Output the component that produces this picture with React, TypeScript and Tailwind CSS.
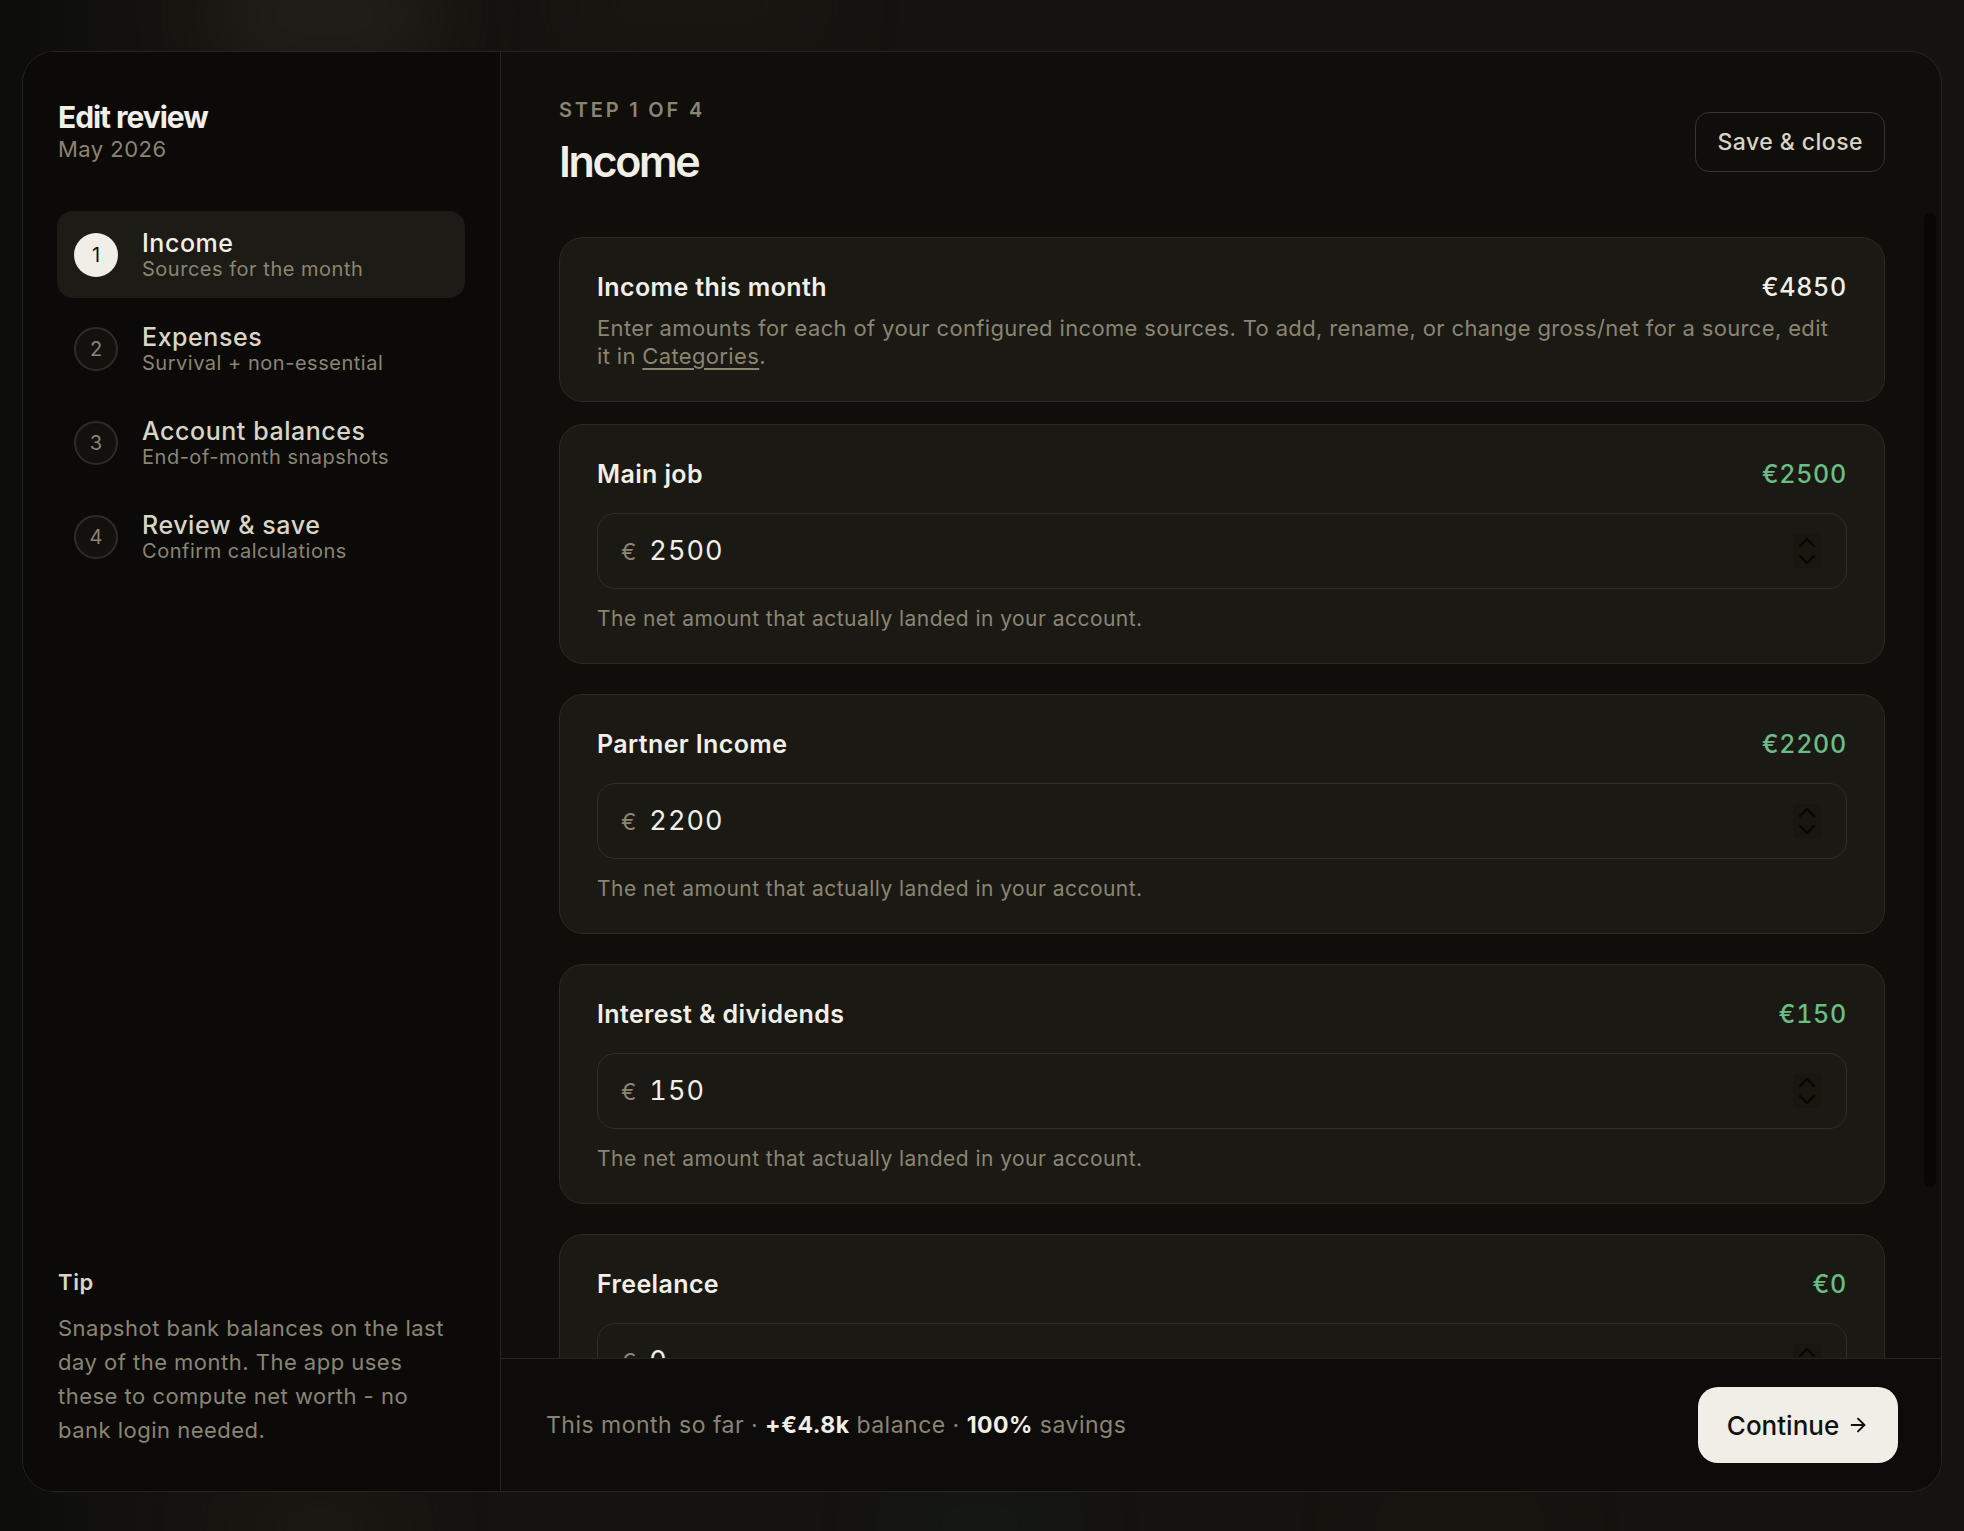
import { ArrowRight } from 'lucide-react'

const steps = [
  { n: 1, title: 'Income', sub: 'Sources for the month', active: true },
  { n: 2, title: 'Expenses', sub: 'Survival + non-essential' },
  { n: 3, title: 'Account balances', sub: 'End-of-month snapshots' },
  { n: 4, title: 'Review & save', sub: 'Confirm calculations' },
]

const sources = [
  { name: 'Main job', value: 2500 },
  { name: 'Partner Income', value: 2200 },
  { name: 'Interest & dividends', value: 150 },
  { name: 'Freelance', value: 0 },
]

function Spinner() {
  return (
    <div className="flex h-[34px] w-[28px] items-center justify-center rounded-[4px] bg-[#17160f]">
      <svg width="18" height="28" viewBox="0 0 18 28" fill="none">
        <path d="M2 9 L9 2 L16 9" stroke="#050504" strokeWidth="2" strokeLinecap="round" strokeLinejoin="round" />
        <path d="M2 19 L9 26 L16 19" stroke="#050504" strokeWidth="2" strokeLinecap="round" strokeLinejoin="round" />
      </svg>
    </div>
  )
}

function SourceCard({ name, value }: { name: string; value: number }) {
  return (
    <div className="shrink-0 rounded-[24px] border border-[#2c2a23] bg-[#1a1913] px-[37px] pb-[30px] pt-[33px]">
      <div className="flex items-center justify-between">
        <span className="text-[25px] leading-[32px] font-semibold tracking-[0.015em] text-[#f1efe7]">{name}</span>
        <span className="text-[25px] leading-[32px] font-medium tabular-nums tracking-[0.03em] text-[#6bbd86]">
          €{value}
        </span>
      </div>
      <div className="mt-[23px] flex h-[76px] items-center justify-between rounded-[18px] border border-[#302e27] bg-[#1a1913] pl-[23px] pr-[25px]">
        <div className="flex items-baseline gap-[13px]">
          <span className="text-[23px] text-[#8a8572]">€</span>
          <span className="text-[27px] tabular-nums tracking-[0.04em] text-[#f1efe7]">{value}</span>
        </div>
        <Spinner />
      </div>
      <p className="mt-[16px] text-[21px] leading-[28px] tracking-[0.022em] text-[#8a8572]">
        The net amount that actually landed in your account.
      </p>
    </div>
  )
}

export default function App() {
  return (
    <div className="relative h-[1531px] w-[1964px] overflow-hidden bg-[#14130f] pb-[39px] pl-[22px] pr-[22px] pt-[51px] font-['Inter','Noto_Sans',sans-serif] antialiased">
      {/* blurred page behind the dialog */}
      <div className="absolute inset-y-0 left-0 w-[170px] bg-gradient-to-r from-[#0c0c0a] to-transparent" />
      <div className="absolute left-[210px] top-[-40px] h-[110px] w-[230px] rounded-full bg-[#2a2820] opacity-60 blur-2xl" />
      <div className="absolute left-[560px] top-[-30px] h-[70px] w-[260px] rounded-full bg-[#1c1b15] opacity-70 blur-2xl" />
      <div className="absolute bottom-[-30px] left-[230px] h-[70px] w-[180px] rounded-full bg-[#211f18] opacity-60 blur-2xl" />
      <div className="absolute bottom-[-30px] left-[900px] h-[70px] w-[160px] rounded-full bg-[#17201a] opacity-60 blur-2xl" />
      <div className="absolute bottom-[-30px] left-[1380px] h-[70px] w-[160px] rounded-full bg-[#221a12] opacity-50 blur-2xl" />

      <div className="relative flex h-full w-full overflow-hidden rounded-[32px] border border-[#26251f] bg-[#0f0e0b]">
        {/* sidebar */}
        <aside className="flex w-[478px] shrink-0 flex-col justify-between border-r border-[#26251f] bg-[#0b0a08] pb-[44px] pl-[34px] pr-[35px] pt-[47px]">
          <div>
            <div className="pl-[1px]">
              <h1 className="text-[30px] leading-[36px] font-bold tracking-[-0.035em] text-[#f1efe7]">Edit review</h1>
              <p className="text-[22px] leading-[28px] tracking-[0.021em] text-[#8a8572]">May 2026</p>
            </div>
            <ul className="mt-[48px] flex flex-col gap-[7px]">
              {steps.map((s) => (
                <li
                  key={s.n}
                  className={`flex h-[87px] items-center gap-[24px] rounded-[16px] pl-[17px] ${s.active ? 'bg-[#1c1b16]' : ''}`}
                >
                  <span
                    className={`flex h-[44px] w-[44px] shrink-0 items-center justify-center rounded-full text-[20px] ${
                      s.active
                        ? 'bg-[#f0eee6] text-[#12110e]'
                        : 'border-2 border-[#2e2c25] bg-[#12110e] text-[#8a8572]'
                    }`}
                  >
                    {s.n}
                  </span>
                  <div className="flex flex-col">
                    <span
                      className={`text-[25px] leading-[28px] font-medium tracking-[0.022em] ${s.active ? 'text-[#f1efe7]' : 'text-[#d9d5c5]'}`}
                    >
                      {s.title}
                    </span>
                    <span className="text-[20px] leading-[24px] tracking-[0.026em] text-[#8a8572]">{s.sub}</span>
                  </div>
                </li>
              ))}
            </ul>
          </div>
          <div className="pl-[1px]">
            <p className="text-[22px] leading-[28px] font-semibold tracking-[0.03em] text-[#d9d5c5]">Tip</p>
            <p className="mt-[15px] w-[395px] text-[22px] leading-[34px] tracking-[0.022em] text-[#8a8572]">
              Snapshot bank balances on the last day of the month. The app uses these to compute net worth - no bank
              login needed.
            </p>
          </div>
        </aside>

        {/* main */}
        <section className="flex min-w-0 flex-1 flex-col">
          <header className="flex items-start justify-between pb-[20px] pl-[58px] pr-[56px] pt-[44px]">
            <div>
              <p className="text-[20px] leading-[28px] font-semibold tracking-[0.14em] text-[#8a8572]">STEP 1 OF 4</p>
              <h2 className="mt-[13px] text-[43px] leading-[48px] font-semibold tracking-[-0.055em] text-[#f1efe7]">
                Income
              </h2>
            </div>
            <button className="mt-[16px] h-[60px] rounded-[14px] border border-[#37352d] px-[21px] text-[23px] font-medium tracking-[0.02em] text-[#d8d4c4]">
              Save &amp; close
            </button>
          </header>

          <div className="relative min-h-0 flex-1 overflow-hidden">
            <div className="flex flex-col pl-[58px] pr-[56px] pt-[32px]">
              <div className="rounded-[24px] border border-[#2c2a23] bg-[#1a1913] px-[37px] pb-[31px] pt-[33px]">
                <div className="flex items-center justify-between">
                  <span className="text-[25px] leading-[32px] font-semibold tracking-[0.015em] text-[#f1efe7]">
                    Income this month
                  </span>
                  <span className="text-[25px] leading-[32px] font-medium tabular-nums tracking-[0.03em] text-[#f1efe7]">
                    €4850
                  </span>
                </div>
                <p className="mt-[11px] text-[22px] leading-[28px] tracking-[0.016em] text-[#8a8572]">
                  Enter amounts for each of your configured income sources. To add, rename, or change gross/net for a
                  source, edit it in <span className="underline underline-offset-4">Categories</span>.
                </p>
              </div>
              <div className="mt-[22px] flex flex-col gap-[30px]">
                {sources.map((s) => (
                  <SourceCard key={s.name} name={s.name} value={s.value} />
                ))}
              </div>
            </div>
            <div className="absolute right-[5px] top-[8px] h-[974px] w-[12px] rounded-full bg-[#080706]" />
          </div>

          <footer className="flex h-[133px] shrink-0 items-center justify-between border-t border-[#26251f] bg-[#0d0c0a] pl-[45px] pr-[43px]">
            <p className="text-[23px] tracking-[0.021em] text-[#8a8572]">
              This month so far · <span className="font-bold text-[#f1efe7]">+€4.8k</span> balance ·{' '}
              <span className="font-bold text-[#f1efe7]">100%</span> savings
            </p>
            <button className="flex h-[76px] w-[200px] items-center justify-center gap-[8px] rounded-[20px] bg-[#f0eee6] text-[26px] font-medium text-[#12110e]">
              Continue
              <ArrowRight size={22} strokeWidth={2} />
            </button>
          </footer>
        </section>
      </div>
    </div>
  )
}
